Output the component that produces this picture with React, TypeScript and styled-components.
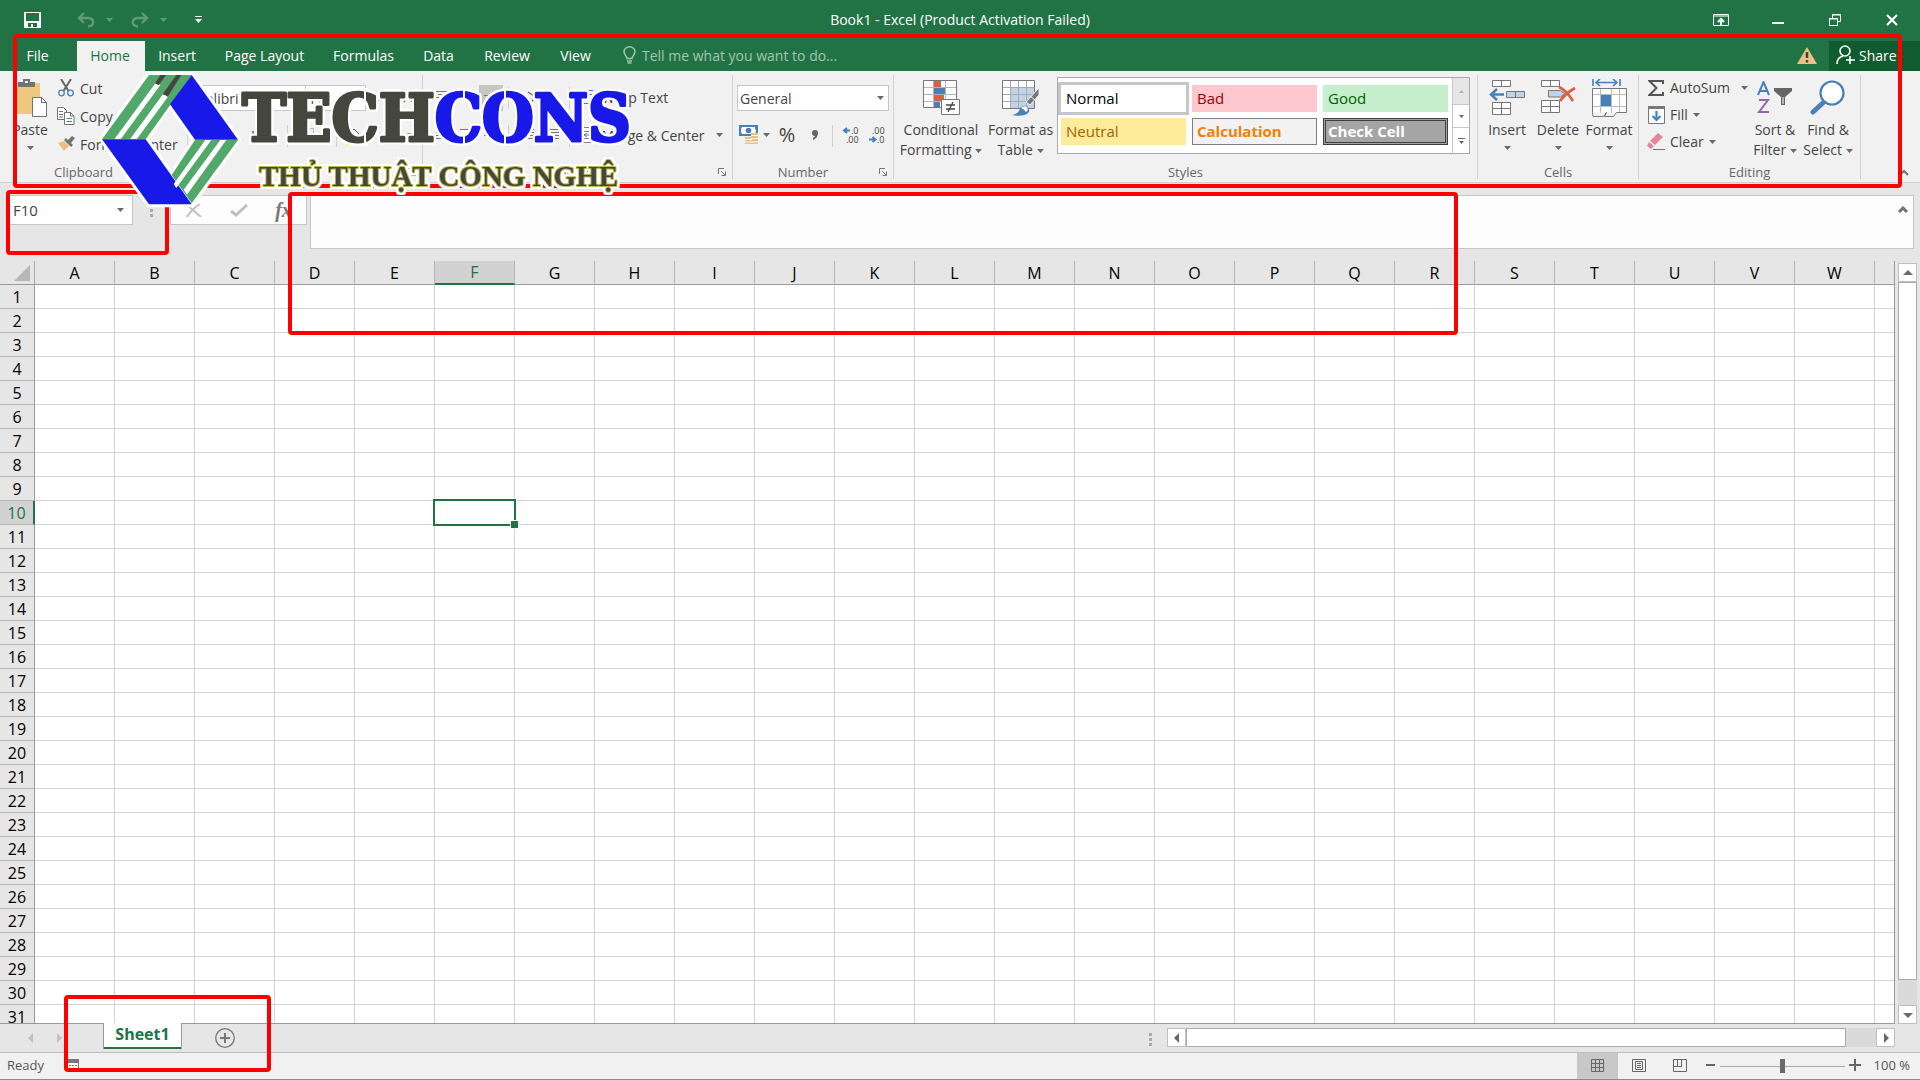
import React from "react";
import styled, { createGlobalStyle, css } from "styled-components";

const GREEN = "#217346";
const BLUE = "#4a80b9";
const INK = "#444444";
const GREY = "#6a6a6a";

const Global = createGlobalStyle`
  * { box-sizing: border-box; }
  body { margin: 0; font-family: "Open Sans", "Noto Sans", sans-serif; font-size: 14px; color: ${INK}; }
  button, input, select, textarea { font: inherit; color: inherit; margin: 0; }
  button { background: none; border: 0; padding: 0; }
`;

const App_ = styled.div`
  position: relative;
  display: flex;
  flex-direction: column;
  height: 100vh;
  overflow: hidden;
  background: #e6e6e6;
`;

/* ---------- title bar ---------- */
const TitleBar = styled.header`
  display: grid;
  grid-template-columns: 1fr auto 1fr;
  align-items: center;
  flex: none;
  height: 41px;
  padding-bottom: 2px;
  background: ${GREEN};
  color: #fff;
`;
const QuickAccess = styled.div`
  display: flex;
  align-items: center;
  padding-left: 24px;
`;
const QuickButton = styled.button<{ $gap?: number; $dim?: boolean }>`
  display: flex;
  margin-left: ${(p) => p.$gap ?? 0}px;
  opacity: ${(p) => (p.$dim ? 0.28 : 1)};
`;
const Title = styled.h1`
  margin: 0;
  font-size: 14px;
  font-weight: 400;
`;
const WindowButtons = styled.div`
  display: flex;
  justify-content: flex-end;
`;
const WindowButton = styled.button`
  display: grid;
  place-items: center;
  width: 57px;
  height: 38px;
`;

/* ---------- ribbon tabs ---------- */
const TabRow = styled.nav`
  display: flex;
  flex: none;
  height: 30px;
  background: ${GREEN};
  color: #fff;
`;
const Tab = styled.button<{ $w: number; $active?: boolean }>`
  width: ${(p) => p.$w}px;
  padding: 0 2px 2px 0;
  white-space: nowrap;
  ${(p) => p.$active && css`background: #f1f1f1; color: ${GREEN};`}
`;
const TellMe = styled.label`
  display: flex;
  align-items: center;
  gap: 6px;
  flex: 1;
  padding: 0 0 2px 16px;
  color: #a3c5b1;
`;
const TellInput = styled.input`
  width: 240px;
  padding: 0;
  border: 0;
  outline: 0;
  background: none;
  &::placeholder { color: #a3c5b1; opacity: 1; }
`;
const Warning = styled.button`
  display: grid;
  place-items: center;
  width: 44px;
`;
const Share = styled.button`
  display: flex;
  align-items: center;
  gap: 4px;
  width: 91px;
  padding: 0 0 2px 7px;
  background: #105c30;
`;

/* ---------- ribbon ---------- */
const Ribbon = styled.section`
  display: flex;
  flex: none;
  height: 112px;
  background: #f1f1f1;
  border-bottom: 1px solid #d2d2d2;
`;
const Group = styled.div<{ $w: number }>`
  display: flex;
  flex-direction: column;
  flex: none;
  width: ${(p) => p.$w}px;
  margin: 4px 0 3px;
  border-right: 1px solid #d2d2d2;
`;
const GroupBody = styled.div<{ $pad?: string }>`
  display: flex;
  flex: 1;
  min-height: 0;
  padding: ${(p) => p.$pad ?? "0"};
`;
const GroupFooter = styled.div`
  display: flex;
  align-items: center;
  height: 14px;
  font-size: 13px;
  line-height: 14px;
  color: #666;
`;
const GroupLabel = styled.span`
  flex: 1;
  text-align: center;
`;
const Launcher = styled.button`
  display: grid;
  place-items: center;
  width: 20px;
  height: 12px;
`;
const RibbonEnd = styled.div`
  display: flex;
  flex: 1;
  align-items: flex-end;
  justify-content: flex-end;
  padding: 0 11px 6px 0;
`;
const BigButton = styled.button<{ $w: number }>`
  display: flex;
  flex-direction: column;
  align-items: center;
  flex: none;
  width: ${(p) => p.$w}px;
  line-height: 20px;
  white-space: nowrap;
`;
const BigIcon = styled.span`
  display: grid;
  place-items: center;
  height: 45px;
`;
const CaretLine = styled.span`
  display: grid;
  place-items: center;
  height: 16px;
`;
const Mid = styled.span`
  display: inline-flex;
  vertical-align: middle;
`;
const SmallColumn = styled.div<{ $row: number }>`
  display: grid;
  grid-auto-rows: ${(p) => p.$row}px;
  align-content: start;
`;
const EditColumn = styled(SmallColumn)`
  width: 101px;
`;
const Push = styled.span`
  display: flex;
  margin-left: auto;
`;
const SmallButton = styled.button`
  display: flex;
  align-items: center;
  gap: 5px;
  padding-bottom: 2px;
  white-space: nowrap;
`;
const SmallIcon = styled.span`
  display: grid;
  place-items: center;
  width: 18px;
`;
const Rows = styled.div`
  display: flex;
  flex-direction: column;
  flex: 1;
  gap: 12px;
`;
const Row = styled.div`
  display: flex;
  align-items: center;
  height: 26px;
`;
const Tool = styled.button<{ $w?: number; $on?: boolean }>`
  display: flex;
  align-items: center;
  justify-content: center;
  gap: 4px;
  flex: none;
  width: ${(p) => p.$w ?? 24}px;
  height: 26px;
  padding-bottom: 2px;
  background: ${(p) => (p.$on ? "#c6c6c6" : "none")};
  white-space: nowrap;
`;
const Bar = styled.span`
  width: 1px;
  height: 22px;
  margin: 0 5px;
  background: #d2d2d2;
`;
const SelectBox = styled.span<{ $w: number }>`
  position: relative;
  display: flex;
  width: ${(p) => p.$w}px;
  height: 26px;
  border: 1px solid #c6c6c6;
  background: #fff;
  & + & { border-left: 0; }
  & > svg { position: absolute; right: 4px; top: 10px; pointer-events: none; }
`;
const Select = styled.select`
  appearance: none;
  width: 100%;
  padding: 0 2px;
  border: 0;
  outline: 0;
  background: none;
`;
const Glyph = styled.span<{ $size: number; $style?: string; $weight?: number; $line?: boolean }>`
  font-size: ${(p) => p.$size}px;
  font-style: ${(p) => p.$style ?? "normal"};
  font-weight: ${(p) => p.$weight ?? 400};
  text-decoration: ${(p) => (p.$line ? "underline" : "none")};
  line-height: 24px;
`;

/* ---------- cell styles gallery ---------- */
const GalleryHold = styled.div`
  padding-top: 2px;
`;
const Gallery = styled.div`
  display: flex;
  width: 413px;
  height: 77px;
  border: 1px solid #ababab;
  background: #fff;
`;
const Swatches = styled.div`
  display: grid;
  flex: 1;
  grid-template-columns: repeat(3, 125px);
  grid-auto-rows: 27px;
  gap: 6px;
  padding: 7px 3px;
`;
const Swatch = styled.button<{ $bg: string; $fg: string; $kind?: "current" | "calc" | "check" }>`
  padding: 0 5px;
  text-align: left;
  font-size: 15px;
  line-height: 25px;
  background: ${(p) => p.$bg};
  color: ${(p) => p.$fg};
  ${(p) => p.$kind === "current" && css`outline: 3px solid #c6c6c6;`}
  ${(p) => p.$kind === "calc" && css`font-weight: 700; box-shadow: inset 0 0 0 1px #7f7f7f;`}
  ${(p) => p.$kind === "check" && css`
    font-weight: 700;
    box-shadow: inset 0 0 0 1px #3f3f3f, inset 0 0 0 2px #a5a5a5, inset 0 0 0 3px #3f3f3f;
  `}
`;
const GalleryScroll = styled.div`
  display: grid;
  grid-template-rows: 26px 23px 1fr;
  width: 17px;
  border-left: 1px solid #c6c6c6;
`;
const GalleryButton = styled.button<{ $off?: boolean }>`
  display: grid;
  place-items: center;
  background: ${(p) => (p.$off ? "#e6e6e6" : "#fff")};
  & + & { border-top: 1px solid #c6c6c6; }
`;

/* ---------- formula bar ---------- */
const FormulaRow = styled.section`
  display: flex;
  flex: none;
  align-items: flex-start;
  height: 78px;
  padding: 12px 6px 0 8px;
`;
const NameBox = styled.label`
  display: flex;
  align-items: center;
  width: 125px;
  height: 30px;
  padding-right: 8px;
  border: 1px solid #c6c6c6;
  background: #fff;
`;
const NameInput = styled.input`
  flex: 1;
  min-width: 0;
  padding: 0 4px;
  border: 0;
  outline: 0;
  background: none;
  font-size: 15px;
`;
const Dots = styled.span<{ $w: number }>`
  display: grid;
  place-items: center;
  width: ${(p) => p.$w}px;
  height: 30px;
`;
const FxBox = styled.div`
  display: flex;
  align-items: center;
  width: 137px;
  height: 30px;
  border: 1px solid #c6c6c6;
  background: #fdfdfd;
`;
const FxButton = styled.button`
  display: grid;
  place-items: center;
  flex: 1;
`;
const FxGlyph = styled.span`
  font-family: "Liberation Serif", serif;
  font-size: 20px;
  font-style: italic;
  font-weight: 700;
  line-height: 24px;
  color: #777;
`;
const FormulaBox = styled.div`
  display: flex;
  flex: 1;
  height: 54px;
  margin-left: 3px;
  padding: 10px 5px;
  border: 1px solid #c6c6c6;
  background: #fdfdfd;
  align-items: flex-start;
`;
const FormulaInput = styled.textarea`
  flex: 1;
  height: 32px;
  padding: 0 4px;
  border: 0;
  outline: 0;
  resize: none;
  background: none;
`;
const IconButton = styled.button`
  display: flex;
`;

/* ---------- sheet ---------- */
const SheetArea = styled.main`
  display: flex;
  flex: 1;
  min-height: 0;
`;
const GridFrame = styled.div`
  flex: 1;
  min-width: 0;
  overflow: hidden;
  border-right: 1px solid #9b9b9b;
  border-bottom: 1px solid #9b9b9b;
`;
const Sheet = styled.table`
  width: 100%;
  table-layout: fixed;
  border-collapse: separate;
  border-spacing: 0;
  color: #000;
`;
const Corner = styled.th`
  height: 24px;
  padding: 0 4px 0 0;
  border-right: 1px solid #ababab;
  border-bottom: 1px solid #9b9b9b;
  background: #e6e6e6;
  & > svg { display: block; margin-left: auto; }
`;
const ColHead = styled.th<{ $on?: boolean }>`
  height: 24px;
  padding: 0;
  border-right: 1px solid #b5b5b5;
  border-bottom: 1px solid #9b9b9b;
  background: #e6e6e6;
  font-size: 16px;
  font-weight: 400;
  line-height: 22px;
  ${(p) => p.$on && css`background: #d2d2d2; color: ${GREEN}; border-bottom: 2px solid ${GREEN};`}
  &:last-child { border-right: 0; }
`;
const RowHead = styled.th<{ $on?: boolean }>`
  height: 24px;
  padding: 0;
  border-right: 1px solid #9b9b9b;
  border-bottom: 1px solid #b5b5b5;
  font-size: 16px;
  font-weight: 400;
  line-height: 22px;
  ${(p) => p.$on && css`background: #d2d2d2; color: ${GREEN}; border-right: 2px solid ${GREEN};`}
`;
const Cell = styled.td<{ $on?: boolean }>`
  position: relative;
  padding: 0;
  border-right: 1px solid #d4d4d4;
  border-bottom: 1px solid #d4d4d4;
  background: #fff;
  &:last-child { border-right: 0; }
  ${(p) => p.$on && css`
    z-index: 1;
    &::before { content: ""; position: absolute; inset: -2px; border: 2px solid ${GREEN}; }
    &::after {
      content: ""; position: absolute; right: -5px; bottom: -5px; width: 7px; height: 7px;
      border: 1px solid #fff; background: ${GREEN};
    }
  `}
`;
const VScroll = styled.div`
  display: flex;
  flex-direction: column;
  flex: none;
  width: 19px;
  margin: 2px 3px 0 3px;
  background: #dadada;
`;
const ScrollButton = styled.button`
  display: grid;
  place-items: center;
  flex: none;
  width: 19px;
  height: 19px;
  border: 1px solid #c0c0c0;
  background: #fff;
`;
const Thumb = styled.div<{ $tail: number; $dir: "row" | "column" }>`
  flex: 1;
  ${(p) => (p.$dir === "row" ? "margin-right" : "margin-bottom")}: ${(p) => p.$tail}px;
  border: 1px solid #ababab;
  background: #fff;
`;

/* ---------- sheet tabs and status ---------- */
const SheetBar = styled.footer`
  display: flex;
  flex: none;
  align-items: flex-start;
  height: 29px;
  padding-right: 25px;
  border-bottom: 1px solid #bdbdbd;
`;
const SheetNav = styled.div`
  display: flex;
  align-items: center;
  gap: 18px;
  width: 103px;
  height: 27px;
  padding-left: 26px;
`;
const SheetTab = styled.button`
  position: relative;
  width: 79px;
  height: 26px;
  margin-top: -1px;
  border: solid #9b9b9b;
  border-width: 0 1px;
  box-shadow: inset 0 -2px ${GREEN};
  background: #fff;
  color: ${GREEN};
  font-size: 16px;
  font-weight: 700;
  line-height: 20px;
  padding-bottom: 5px;
`;
const AddSheet = styled.button`
  display: grid;
  margin: 4px auto 0 33px;
`;
const HScroll = styled.div`
  display: flex;
  width: 728px;
  height: 19px;
  margin: 4px 0 0 12px;
  background: #dadada;
`;
const StatusBar = styled.footer`
  display: flex;
  flex: none;
  align-items: center;
  height: 27px;
  padding: 0 10px 0 7px;
  border-bottom: 1px solid #8c8c8c;
  background: #f1f1f1;
  font-size: 13px;
  line-height: 18px;
  color: #555;
`;
const Ready = styled.span`
  width: 60px;
  padding-bottom: 2px;
`;
const Spacer = styled.span`
  flex: 1;
`;
const ViewButton = styled.button<{ $on?: boolean }>`
  display: grid;
  place-items: center;
  width: 41px;
  height: 26px;
  padding-bottom: 2px;
  background: ${(p) => (p.$on ? "#c8c8c8" : "none")};
`;
const ZoomButton = styled.button`
  display: grid;
  place-items: center;
  width: 20px;
  height: 26px;
  padding-bottom: 2px;
`;
const ZoomRange = styled.input`
  appearance: none;
  width: 125px;
  height: 14px;
  background: linear-gradient(#ababab, #ababab) center / 100% 1px no-repeat;
  &::-webkit-slider-thumb { appearance: none; width: 5px; height: 14px; background: ${GREY}; }
`;
const ZoomValue = styled.span`
  width: 45px;
  padding-bottom: 2px;
  text-align: right;
`;

/* ---------- annotations ---------- */
const Frame = styled.div<{ $area: string }>`
  position: absolute;
  z-index: 5;
  inset: ${(p) => p.$area};
  border: 4px solid #ff0000;
  border-radius: 4px;
  pointer-events: none;
`;
const Brand = styled.svg`
  position: absolute;
  z-index: 6;
  left: 96px;
  top: 66px;
  pointer-events: none;
`;
const Halo = styled.g`
  filter: drop-shadow(2px 0 0 #fff) drop-shadow(-2px 0 0 #fff) drop-shadow(0 2px 0 #fff) drop-shadow(0 -2px 0 #fff);
`;

/* ---------- icons ---------- */
const Caret = ({ c = GREY }: { c?: string }) => (
  <svg width="7" height="4" viewBox="0 0 7 4"><path d="M0 0h7L3.5 4z" fill={c} /></svg>
);
const Tri = ({ d, c = "#6a6a6a" }: { d: "up" | "down" | "left" | "right"; c?: string }) => {
  const p = { up: "M0 7 5 2l5 5z", down: "M0 3h10L5 8z", left: "M7 0v10L2 5z", right: "M3 0v10l5-5z" }[d];
  return <svg width="10" height="10" viewBox="0 0 10 10"><path d={p} fill={c} /></svg>;
};
const DotsIcon = () => (
  <svg width="3" height="13" viewBox="0 0 3 13" fill="#ababab"><path d="M0 0h3v3H0zM0 5h3v3H0zM0 10h3v3H0z" /></svg>
);
const LaunchIcon = () => (
  <svg width="8" height="8" viewBox="0 0 8 8" fill="none" stroke="#777"><path d="M.5 6V.5H6M3 3l4 4M7.5 3.500V7.500H3.500" /></svg>
);
const SaveIcon = () => (
  <svg width="17" height="16" viewBox="0 0 17 16"><path d="M0 0h17v16H0zM2 1v8h13V1zM4 11v4h3v-3h2v3h4v-4z" fill="#fff" fillRule="evenodd" /></svg>
);
const UndoIcon = () => (
  <svg width="18" height="16" viewBox="0 0 18 16" fill="none" stroke="#fff" strokeWidth="2.400"><path d="M7 1 2 6l5 5M2 6h9c7 0 7 8 0 8.500" /></svg>
);
const RedoIcon = () => (
  <svg width="18" height="16" viewBox="0 0 18 16" fill="none" stroke="#fff" strokeWidth="2.400"><path d="m11 1 5 5-5 5M16 6H7c-7 0-7 8 0 8.500" /></svg>
);
const BulbIcon = () => (
  <svg width="13" height="18" viewBox="0 0 13 18" fill="none" stroke="#a3c5b1" strokeWidth="1.500"><path d="M4 12.500C4 10 1 9 1 5.800a5.500 5 0 0 1 11 0C12 9 9 10 9 12.500zM4 15h5M4.500 17h4" /></svg>
);
const WarnIcon = () => (
  <svg width="20" height="18" viewBox="0 0 20 18"><path d="M10 0 20 17H0z" fill="#eac282" /><path d="M10 5v6M10 13v2.500" stroke="#444" strokeWidth="2.500" /></svg>
);
const PersonIcon = () => (
  <svg width="19" height="20" viewBox="0 0 19 20" fill="none" stroke="#fff" strokeWidth="1.600"><circle cx="9" cy="6" r="5" /><path d="M1 19c0-4 2-7 6-8M14 11v8M10 15h9" /></svg>
);
const PasteIcon = () => (
  <svg width="33" height="39" viewBox="0 0 33 39"><path d="M0 5h26v31H0z" fill="#edc87e" /><path d="M4 4h5V1h7v3h5v5H4z" fill="#737373" /><path d="M11 3h3v2h-3z" fill="#f1f1f1" /><path d="M18.500 19.500h9l5 5v14h-14z" fill="#fff" stroke="#737373" /><path d="M27.500 19.500v5h5" fill="none" stroke="#737373" /></svg>
);
const CutIcon = () => (
  <svg width="16" height="18" viewBox="0 0 16 18" fill="none"><path d="m3 0 7.500 12M13 0 5.500 12" stroke="#666" strokeWidth="2" /><circle cx="3.500" cy="14" r="2.800" stroke={BLUE} strokeWidth="1.300" /><circle cx="12.500" cy="14" r="2.800" stroke={BLUE} strokeWidth="1.300" /></svg>
);
const CopyIcon = () => (
  <svg width="18" height="18" viewBox="0 0 18 18"><g fill="#fff" stroke="#737373"><path d="M.5.5h6l3 3v9h-9z" /><path d="M7.500 5.500h6l3.500 3.500v8.500H7.500z" /><path d="M13.500 5.500V9H17" fill="none" /></g><path d="M2 4.500h4M2 7.500h4M2 10h4M9.500 11.500h5.500M9.500 14.500h5.500" stroke={BLUE} /></svg>
);
const BrushIcon = () => (
  <svg width="18" height="16" viewBox="0 0 18 16"><path d="m1 7 6-2 5 5-5 5z" fill="#e9c083" /><path d="m7 4 2-2 7 7-2 2zM11 4l4-4 3 2-4 5z" fill="#737373" /></svg>
);
const FillIcon = () => (
  <svg width="17" height="19" viewBox="0 0 17 19"><path d="m2 9 6-6 5 5-6 6z" fill="#fff" stroke="#666" /><path d="M12 8q4 1 3 5-3-1-3-5" fill={BLUE} /><path d="M0 16h17v3H0z" fill="#ff0" /></svg>
);
const BorderIcon = () => (
  <svg width="15" height="15" viewBox="0 0 15 15" stroke="#888" fill="none"><path d="M.5.5h14v14H.5zM7.500 0v15M0 7.500h15" strokeDasharray="1 1" /><path d="M0 14h15" stroke="#444" strokeWidth="2" /></svg>
);
const FontColorIcon = () => (
  <svg width="20" height="19" viewBox="0 0 20 19"><path d="m5 13 5-12 5 12M7 9h6" stroke="#555" strokeWidth="1.600" fill="none" /><path d="M0 17h20v2H0z" fill="#f33" /></svg>
);
const LinesIcon = ({ v }: { v: number }) => (
  <svg width="14" height="16" viewBox="0 0 14 16" stroke="#777">
    {v < 3
      ? <path d={`M0 ${2.5 + v * 2}h14M2 ${5.5 + v * 2}h10M0 ${8.5 + v * 2}h14`} />
      : <path d={["M0 2.500h14M0 5.500h9M0 8.500h14M0 11.500h9", "M0 2.500h14M2 5.500h10M0 8.500h14M2 11.500h10", "M0 2.500h14M5 5.500h9M0 8.500h14M5 11.500h9", "M0 2.500h14M6 5.500h8M6 8.500h8M0 11.500h14"][v - 3]} />}
  </svg>
);
const OrientIcon = () => (
  <svg width="18" height="18" viewBox="0 0 18 18" fill="none" stroke="#666" strokeWidth="1.300"><path d="M3 17 15 5M11 5h4v4M1 8l5 4M3 4l6 4" /></svg>
);
const WrapIcon = () => (
  <svg width="16" height="18" viewBox="0 0 16 18" fill="none" stroke={BLUE}><path d="M1 2.500h10M1 6.500h13q2 5-3 5H8M1 11.500h4M1 15.500h6M10 9l-2 2.500 2 2.500" /></svg>
);
const MergeIcon = () => (
  <svg width="16" height="16" viewBox="0 0 16 16" fill="#fff" stroke="#888"><path d="M.5.5h15v15H.5zM0 4.500h16M0 11.500h16M8 0v4M8 12v4" /><path d="M2 8h12M5 6 2 8l3 2M11 6l3 2-3 2" stroke={BLUE} fill="none" /></svg>
);
const MoneyIcon = () => (
  <svg width="20" height="20" viewBox="0 0 20 20"><path d="M0 0h19v11H0z" fill={BLUE} /><path d="M3 2h13v2l1 1v2l-1 2H3L2 7V4z" fill="#fff" /><circle cx="9.500" cy="5.500" r="2.800" fill={BLUE} /><path d="M12 8h7v11h-6v-5h-1zM6 12h8v7H6z" fill="#e9c083" /><path d="M12 10.500h7M12 13.500h7M6 14.500h7M6 17h13" stroke="#fff" /></svg>
);
const DecimalIcon = ({ inc }: { inc?: boolean }) => (
  <svg width="19" height="22" viewBox="0 0 19 22" fontFamily="Open Sans, sans-serif" fontSize="9" fill="#444">
    <text x={inc ? 9 : 4} y="10">{inc ? ".0" : ".00"}</text>
    <text x={inc ? 4 : 9} y="19">{inc ? ".00" : ".0"}</text>
    <path d={inc ? "M8 6.500H2M5 4 2 6.500 5 9" : "M1 15.500h6M4.500 13l3 2.500-3 2.500"} stroke={BLUE} strokeWidth="2" fill="none" />
  </svg>
);
const CondIcon = () => (
  <svg width="37" height="35" viewBox="0 0 37 35"><path d="M.5.5h33v27H.5z" fill="#fff" /><path d="M11 1h7v7h-7zM11 15h10v7H11z" fill="#dc6142" /><path d="M11 8h12v6H11zM11 22h6v6h-6z" fill={BLUE} /><path d="M10.500 0v28M22.500 0v28M0 7.500h34M0 14.500h34M0 21.500h34" stroke="#b5b5b5" /><path d="M.5.5h33v27H.5z" fill="none" stroke="#777" /><path d="M18.500 19.500h18v15h-18z" fill="#fff" stroke="#777" /><path d="M23 25h9M23 29h9M30 22l-5 10" stroke="#444" strokeWidth="1.300" /></svg>
);
const TableIcon = () => (
  <svg width="38" height="36" viewBox="0 0 38 36"><path d="M.5.5h32v28H.5z" fill="#fff" /><path d="M9 8h24v21H9z" fill="#bfd3e9" /><path d="M8.500 0v29M16.500 0v29M24.500 0v29M0 7.500h33M0 14.500h33M0 21.500h33" stroke="#aaa" /><path d="M.5.5h32v28H.5z" fill="none" stroke="#777" /><path d="M37 8v7L28 25l-4-3z" fill="#777" stroke="#f1f1f1" /><path d="m28 16 5 4" stroke="#f1f1f1" /><path d="M10 35q7-1 8-7 4-4 8-1 3 4-1 7-5 3-15 1" fill={BLUE} /><path d="M19 28q3-3 6-1 2 3-1 5-2-3-5-4" fill="#fff" /></svg>
);
const InsertIcon = () => (
  <svg width="36" height="37" viewBox="0 0 36 37"><g fill="#fff" stroke="#777"><path d="M3.500 1.500h18v6h-18zM12.500 1v7M3.500 23.500h18v12h-18zM3 29.500h19M12.500 23v13" /><path d="M17.500 12.500h18v6h-18zM26.500 12v7" fill="#bfd3e9" /></g><path d="M15 15.500H2M8 10l-6 5.500L8 21" stroke={BLUE} strokeWidth="2.500" fill="none" /></svg>
);
const DeleteIcon = () => (
  <svg width="36" height="37" viewBox="0 0 36 37"><g fill="#fff" stroke="#777"><path d="M1.500 1.500h18v6h-18zM10.500 1v7M1.500 21.500h18v12h-18zM1 27.500h19M10.500 21v13" /><path d="M8.500 11.500h12l4 3-4 3.500h-12z" fill="#bfd3e9" /></g><path d="M19 8q7 3 14 14M35 9q-9 5-15 13" stroke="#dc6142" strokeWidth="2.800" fill="none" /></svg>
);
const FormatIcon = () => (
  <svg width="35" height="38" viewBox="0 0 35 38"><path d="M1 0v7M28 0v7M4 3.500h21M8 0 4 3.500 8 7M21 0l4 3.500L21 7" stroke={BLUE} strokeWidth="1.600" fill="none" /><path d="M.5 9.500h34v24H.5z" fill="#fff" /><path d="M8.500 9v25M19.500 9v25M27.500 9v25M0 15.500h35M0 27.500h35" stroke="#bbb" /><path d="M.5 9.500h34v24h-10l-3 4h-9l2-4-3 4H1l-.5-4z" fill="none" stroke="#777" /><path d="M9 16h10v11H9z" fill={BLUE} /></svg>
);
const SumIcon = () => (
  <svg width="16" height="16" viewBox="0 0 16 16"><path d="M15 4V1H1.500l7 7-7 7H15v-3" fill="none" stroke="#555" strokeWidth="2" /></svg>
);
const FillDownIcon = () => (
  <svg width="17" height="18" viewBox="0 0 17 18"><path d="M.5.5h16v17H.5z" fill="#fff" stroke="#777" /><path d="M0 0h17v3H0z" fill="#777" /><path d="M8.500 5v9M4.500 10l4 4 4-4" stroke={BLUE} strokeWidth="2.200" fill="none" /></svg>
);
const EraserIcon = () => (
  <svg width="18" height="17" viewBox="0 0 18 17"><path d="m11 0 5 4-8 8-5-4z" fill="#e9859a" /><path d="m2 9 5 4-3 3-4-3z" fill="#e9859a" /><path d="M6 16.500h12" stroke="#777" /></svg>
);
const SortIcon = () => (
  <svg width="36" height="33" viewBox="0 0 36 33" fill="none"><path d="M1 14 6.500 1 12 14M3 10h7" stroke={BLUE} strokeWidth="2" /><path d="M2 19h9L2 31h10" stroke="#9a5fb8" strokeWidth="2" /><path d="M17 7h18v3l-7 6v8h-4v-8l-7-6z" fill="#666" /><path d="M26 16v7" stroke="#fff" /></svg>
);
const FindIcon = () => (
  <svg width="36" height="36" viewBox="0 0 36 36"><path d="m3 32 12-11" stroke={BLUE} strokeWidth="5" strokeLinecap="round" /><circle cx="22" cy="13" r="11.500" fill="#fff" stroke={BLUE} strokeWidth="2.200" /></svg>
);
const RibbonOptIcon = () => (
  <svg width="16" height="12" viewBox="0 0 16 12" fill="none" stroke="#fff"><path d="M.5.5h15v11H.5zM0 2h16" /><path d="M8 11V5M5 8l3-3 3 3" strokeWidth="2" /></svg>
);
const MinIcon = () => <svg width="12" height="12" viewBox="0 0 12 12"><path d="M0 8h12v2H0z" fill="#fff" /></svg>;
const RestoreIcon = () => (
  <svg width="12" height="12" viewBox="0 0 12 12" fill="none" stroke="#fff"><path d="M.5 4.500h8v7h-8zM3.500 4V.5h8v7H9" /><path d="M0 5h9M3 1h9" /></svg>
);
const CloseIcon = () => <svg width="12" height="12" viewBox="0 0 12 12"><path d="m1 1 10 10M11 1 1 11" stroke="#fff" strokeWidth="2.200" /></svg>;
const Chevron = ({ w = 2 }: { w?: number }) => (
  <svg width="10" height="7" viewBox="0 0 10 7"><path d="m1 6 4-4 4 4" fill="none" stroke="#737373" strokeWidth={w} /></svg>
);

/* ---------- data ---------- */
const TABS: [string, number][] = [
  ["Home", 68], ["Insert", 66], ["Page Layout", 109], ["Formulas", 89], ["Data", 61], ["Review", 76], ["View", 61],
];
const COLS = "ABCDEFGHIJKLMNOPQRSTUVW".split("");
const ROWS = Array.from({ length: 31 }, (_, i) => i + 1);

const GroupBox = ({ w, label, pad, launch, children }: {
  w: number; label: string; pad?: string; launch?: boolean; children: React.ReactNode;
}) => (
  <Group $w={w}>
    <GroupBody $pad={pad}>{children}</GroupBody>
    <GroupFooter>
      <GroupLabel>{label}</GroupLabel>
      {launch && <Launcher aria-label={`${label} settings`}><LaunchIcon /></Launcher>}
    </GroupFooter>
  </Group>
);

const Big = ({ w, icon, top, bottom }: { w: number; icon: React.ReactNode; top: string; bottom?: string }) => (
  <BigButton $w={w}>
    <BigIcon>{icon}</BigIcon>
    <span>{top}</span>
    {bottom ? <span>{bottom} <Mid><Caret /></Mid></span> : <CaretLine><Caret /></CaretLine>}
  </BigButton>
);

const Logo = () => (
  <Brand width="544" height="144" viewBox="96 66 544 144" role="img" aria-label="Techcons">
    <g transform="translate(80 60) scale(.33333)">
      <path d="M207 45H335L474 239 335 433H207L66 238zM270 133 197 238 275 345 345 240z" fill="#fff" fillRule="evenodd" stroke="#fff" strokeWidth="18" strokeLinejoin="round" />
      <path d="M207 45H335L197 238H66z" fill="#52a868" />
      <path d="M103 238 229 66l12 9-119 163zM150 238l101-138 12 12-93 126z" fill="#fff" />
      <path d="m225 70 16-25h17l-22 31zM248 103l41-58h15l-40 64z" fill="#45463e" />
      <path d="M335 45 474 239H345L270 133z" fill="#1818e8" />
      <path d="M66 238H197L335 433H207z" fill="#1818e8" />
      <path d="M345 240H474L335 430 275 345z" fill="#52a868" />
      <path d="M376 240h18l-105 144-8-12zM421 240h18L321 404l-10-15z" fill="#fff" />
    </g>
    <Halo>
      <g fontFamily="'DejaVu Serif Condensed', 'DejaVu Serif', serif" fontWeight="700" fontSize="66" strokeWidth="3" strokeLinejoin="round">
        <text x="242" y="141" fill="#45463e" stroke="#45463e">TECH<tspan fill="#1818e8" stroke="#1818e8">CONS</tspan></text>
      </g>
      <path d="M365 90v11M365 132v12M464 90v11M464 132v12M505 90v11M505 132v12" stroke="#fff" strokeWidth="2" />
    </Halo>
    <Halo>
      <g fontFamily="'Liberation Serif', serif" fontWeight="700" fontSize="29" strokeLinejoin="round" paintOrder="stroke">
        <text x="259" y="186" fill="#45463e" stroke="#bdb84e" strokeWidth="2">THỦ THUẬT CÔNG NGHỆ</text>
      </g>
    </Halo>
  </Brand>
);

export default function App() {
  return (
    <App_>
      <Global />
      <TitleBar>
        <QuickAccess>
          <QuickButton aria-label="Save"><SaveIcon /></QuickButton>
          <QuickButton $gap={36} $dim aria-label="Undo"><UndoIcon /></QuickButton>
          <QuickButton $gap={11} $dim aria-label="Undo list"><Caret c="#fff" /></QuickButton>
          <QuickButton $gap={18} $dim aria-label="Redo"><RedoIcon /></QuickButton>
          <QuickButton $gap={11} $dim aria-label="Redo list"><Caret c="#fff" /></QuickButton>
          <QuickButton $gap={28} aria-label="Customize toolbar">
            <svg width="7" height="7" viewBox="0 0 7 7" fill="#fff"><path d="M0 0h7v1H0zM0 3h7L3.500 7z" /></svg>
          </QuickButton>
        </QuickAccess>
        <Title>Book1 - Excel (Product Activation Failed)</Title>
        <WindowButtons>
          <WindowButton aria-label="Ribbon display options"><RibbonOptIcon /></WindowButton>
          <WindowButton aria-label="Minimize"><MinIcon /></WindowButton>
          <WindowButton aria-label="Restore"><RestoreIcon /></WindowButton>
          <WindowButton aria-label="Close"><CloseIcon /></WindowButton>
        </WindowButtons>
      </TitleBar>

      <TabRow>
        <Tab $w={77}>File</Tab>
        {TABS.map(([name, w]) => <Tab key={name} $w={w} $active={name === "Home"}>{name}</Tab>)}
        <TellMe><BulbIcon /><TellInput aria-label="Tell me" placeholder="Tell me what you want to do..." /></TellMe>
        <Warning aria-label="Activation warning"><WarnIcon /></Warning>
        <Share><PersonIcon />Share</Share>
      </TabRow>

      <Ribbon>
        <GroupBox w={188} label="Clipboard" launch pad="0 0 0 3px">
          <Big w={54} icon={<PasteIcon />} top="Paste" />
          <SmallColumn $row={28}>
            <SmallButton><SmallIcon><CutIcon /></SmallIcon>Cut</SmallButton>
            <SmallButton><SmallIcon><CopyIcon /></SmallIcon>Copy</SmallButton>
            <SmallButton><SmallIcon><BrushIcon /></SmallIcon>Format Painter</SmallButton>
          </SmallColumn>
        </GroupBox>

        <GroupBox w={235} label="Font" launch pad="10px 0 0 6px">
          <Rows>
            <Row>
              <SelectBox $w={112}><Select aria-label="Font"><option>Calibri</option></Select><Caret /></SelectBox>
              <SelectBox $w={60}><Select aria-label="Font size"><option>11</option></Select><Caret /></SelectBox>
              <Tool $w={30} aria-label="Increase font size"><Glyph $size={18}>A</Glyph></Tool>
              <Tool aria-label="Decrease font size"><Glyph $size={14}>A</Glyph></Tool>
            </Row>
            <Row>
              <Tool><Glyph $size={15} $weight={700}>B</Glyph></Tool>
              <Tool><Glyph $size={15} $style="italic">I</Glyph></Tool>
              <Tool $w={40}><Glyph $size={15} $line>U</Glyph><Caret /></Tool>
              <Bar />
              <Tool $w={38} aria-label="Borders"><BorderIcon /><Caret /></Tool>
              <Bar />
              <Tool $w={36} aria-label="Fill color"><FillIcon /><Caret /></Tool>
              <Tool $w={40} aria-label="Font color"><FontColorIcon /><Caret /></Tool>
            </Row>
          </Rows>
        </GroupBox>

        <GroupBox w={310} label="Alignment" launch pad="10px 0 0 8px">
          <Rows>
            <Row>
              <Tool aria-label="Top align"><LinesIcon v={0} /></Tool>
              <Tool aria-label="Middle align"><LinesIcon v={1} /></Tool>
              <Tool $on aria-label="Bottom align"><LinesIcon v={2} /></Tool>
              <Bar />
              <Tool $w={50} aria-label="Orientation"><OrientIcon /><Caret /></Tool>
              <Bar />
              <Tool $w={100}><WrapIcon />Wrap Text</Tool>
            </Row>
            <Row>
              <Tool aria-label="Align left"><LinesIcon v={3} /></Tool>
              <Tool aria-label="Center"><LinesIcon v={4} /></Tool>
              <Tool aria-label="Align right"><LinesIcon v={5} /></Tool>
              <Bar />
              <Tool $w={25} aria-label="Decrease indent"><LinesIcon v={6} /></Tool>
              <Tool $w={25} aria-label="Increase indent"><LinesIcon v={6} /></Tool>
              <Bar />
              <Tool $w={136}><MergeIcon />Merge &amp; Center</Tool>
              <Tool $w={16} aria-label="Merge options"><Caret /></Tool>
            </Row>
          </Rows>
        </GroupBox>

        <GroupBox w={161} label="Number" launch pad="10px 0 0 4px">
          <Rows>
            <Row><SelectBox $w={152}><Select aria-label="Number format"><option>General</option></Select><Caret /></SelectBox></Row>
            <Row>
              <Tool $w={34} aria-label="Accounting format"><MoneyIcon /><Caret /></Tool>
              <Tool $w={32}><Glyph $size={20}>%</Glyph></Tool>
              <Tool aria-label="Comma style">
                <svg width="7" height="10" viewBox="0 0 7 10"><path d="M3 0a3 3 0 0 1 3 3Q6 8 1 10V8q2-1 2-2a3 3 0 0 1 0-6" fill="#666" /></svg>
              </Tool>
              <Bar />
              <Tool $w={26} aria-label="Increase decimal"><DecimalIcon inc /></Tool>
              <Tool $w={26} aria-label="Decrease decimal"><DecimalIcon /></Tool>
            </Row>
          </Rows>
        </GroupBox>

        <GroupBox w={584} label="Styles" pad="0 0 0 4px">
          <Big w={86} icon={<CondIcon />} top="Conditional" bottom="Formatting" />
          <Big w={73} icon={<TableIcon />} top="Format as" bottom="Table" />
          <GalleryHold>
            <Gallery>
              <Swatches>
                <Swatch $bg="#fff" $fg="#000" $kind="current">Normal</Swatch>
                <Swatch $bg="#ffc7ce" $fg="#9c0006">Bad</Swatch>
                <Swatch $bg="#c6efce" $fg="#006100">Good</Swatch>
                <Swatch $bg="#ffeb9c" $fg="#9c6500">Neutral</Swatch>
                <Swatch $bg="#f2f2f2" $fg="#fa7d00" $kind="calc">Calculation</Swatch>
                <Swatch $bg="#a5a5a5" $fg="#fff" $kind="check">Check Cell</Swatch>
              </Swatches>
              <GalleryScroll>
                <GalleryButton $off aria-label="Previous styles"><svg width="5" height="3" viewBox="0 0 5 3"><path d="M0 3h5L2.500 0z" fill="#b5b5b5" /></svg></GalleryButton>
                <GalleryButton aria-label="Next styles"><svg width="5" height="3" viewBox="0 0 5 3"><path d="M0 0h5L2.500 3z" fill="#666" /></svg></GalleryButton>
                <GalleryButton aria-label="All styles"><svg width="7" height="6" viewBox="0 0 7 6"><path d="M0 0h7v1H0zM1 3h5L3.500 6z" fill="#666" /></svg></GalleryButton>
              </GalleryScroll>
            </Gallery>
          </GalleryHold>
        </GroupBox>

        <GroupBox w={161} label="Cells" pad="0 0 0 4px">
          <Big w={50} icon={<InsertIcon />} top="Insert" />
          <Big w={52} icon={<DeleteIcon />} top="Delete" />
          <Big w={50} icon={<FormatIcon />} top="Format" />
        </GroupBox>

        <GroupBox w={222} label="Editing" pad="0 0 0 8px">
          <EditColumn $row={27}>
            <SmallButton><SmallIcon><SumIcon /></SmallIcon>AutoSum<Push><Caret /></Push></SmallButton>
            <SmallButton><SmallIcon><FillDownIcon /></SmallIcon>Fill<Caret /></SmallButton>
            <SmallButton><SmallIcon><EraserIcon /></SmallIcon>Clear<Caret /></SmallButton>
          </EditColumn>
          <Big w={54} icon={<SortIcon />} top="Sort &amp;" bottom="Filter" />
          <Big w={52} icon={<FindIcon />} top="Find &amp;" bottom="Select" />
        </GroupBox>
        <RibbonEnd><IconButton aria-label="Collapse ribbon"><Chevron /></IconButton></RibbonEnd>
      </Ribbon>

      <FormulaRow>
        <NameBox><NameInput aria-label="Name box" defaultValue="F10" /><Caret /></NameBox>
        <Dots $w={37}><DotsIcon /></Dots>
        <FxBox>
          <FxButton aria-label="Cancel"><svg width="16" height="13" viewBox="0 0 16 13"><path d="m1 1 14 12M14 0Q6 5 1 13" stroke="#c0c0c0" strokeWidth="2" fill="none" /></svg></FxButton>
          <FxButton aria-label="Enter"><svg width="18" height="13" viewBox="0 0 18 13"><path d="m1 7 5 4L17 1" stroke="#c0c0c0" strokeWidth="3" fill="none" /></svg></FxButton>
          <FxButton aria-label="Insert function"><FxGlyph>fx</FxGlyph></FxButton>
        </FxBox>
        <FormulaBox>
          <FormulaInput aria-label="Formula" />
          <IconButton aria-label="Collapse formula bar"><Chevron w={3} /></IconButton>
        </FormulaBox>
      </FormulaRow>

      <SheetArea>
        <GridFrame>
          <Sheet>
            <colgroup>
              <col width="35" />
              {COLS.map((c) => <col key={c} width="80" />)}
              <col />
            </colgroup>
            <thead>
              <tr>
                <Corner><svg width="16" height="16" viewBox="0 0 16 16"><path d="M16 0v16H0z" fill="#b5b8b7" /></svg></Corner>
                {COLS.map((c) => <ColHead key={c} $on={c === "F"}>{c}</ColHead>)}
                <ColHead />
              </tr>
            </thead>
            <tbody>
              {ROWS.map((r) => (
                <tr key={r}>
                  <RowHead $on={r === 10}>{r}</RowHead>
                  {COLS.map((c) => <Cell key={c} $on={c === "F" && r === 10} />)}
                  <Cell />
                </tr>
              ))}
            </tbody>
          </Sheet>
        </GridFrame>
        <VScroll>
          <ScrollButton aria-label="Scroll up"><Tri d="up" /></ScrollButton>
          <Thumb $dir="column" $tail={25} />
          <ScrollButton aria-label="Scroll down"><Tri d="down" /></ScrollButton>
        </VScroll>
      </SheetArea>

      <SheetBar>
        <SheetNav>
          <IconButton aria-label="Previous sheet"><Tri d="left" c="#c0c0c0" /></IconButton>
          <IconButton aria-label="Next sheet"><Tri d="right" c="#c0c0c0" /></IconButton>
        </SheetNav>
        <SheetTab>Sheet1</SheetTab>
        <AddSheet aria-label="New sheet">
          <svg width="20" height="20" viewBox="0 0 20 20" fill="none" stroke="#777"><circle cx="10" cy="10" r="9.300" strokeWidth="1.300" /><path d="M10 5v10M5 10h10" strokeWidth="2" /></svg>
        </AddSheet>
        <Dots $w={9}><DotsIcon /></Dots>
        <HScroll>
          <ScrollButton aria-label="Scroll left"><Tri d="left" /></ScrollButton>
          <Thumb $dir="row" $tail={30} />
          <ScrollButton aria-label="Scroll right"><Tri d="right" /></ScrollButton>
        </HScroll>
      </SheetBar>

      <StatusBar>
        <Ready>Ready</Ready>
        <svg width="12" height="15" viewBox="0 0 12 15"><path d="M.5.5h11v11H.5z" fill="#fff" stroke="#777" /><path d="M0 0h12v4H0z" fill="#777" /><path d="M2 6.500h8M2 9.500h8" stroke="#777" strokeDasharray="2 1" /></svg>
        <Spacer />
        <ViewButton $on aria-label="Normal view"><svg width="13" height="13" viewBox="0 0 13 13" fill="none" stroke="#666"><path d="M.5.5h12v12H.5zM4.500 0v13M8.500 0v13M0 4.500h13M0 8.500h13" /></svg></ViewButton>
        <ViewButton aria-label="Page layout view"><svg width="14" height="13" viewBox="0 0 14 13" fill="none" stroke="#666"><path d="M.5.5h13v12H.5zM3.500 2.500h7v8h-7zM5 4.500h4M5 6.500h4M5 8.500h4" /></svg></ViewButton>
        <ViewButton aria-label="Page break view"><svg width="14" height="13" viewBox="0 0 14 13" fill="none" stroke="#666"><path d="M.5.5h13v12H.5zM4.500 0v7.500M8.500 0v7.500M0 7.500h9" /></svg></ViewButton>
        <ZoomButton aria-label="Zoom out"><svg width="9" height="2" viewBox="0 0 9 2"><path d="M0 0h9v2H0z" fill="#666" /></svg></ZoomButton>
        <ZoomRange type="range" aria-label="Zoom" min={0} max={200} defaultValue={100} />
        <ZoomButton aria-label="Zoom in"><svg width="12" height="12" viewBox="0 0 12 12"><path d="M6 0v12M0 6h12" stroke="#666" strokeWidth="2" /></svg></ZoomButton>
        <ZoomValue>100 %</ZoomValue>
      </StatusBar>

      <Frame $area="34px 18px calc(100% - 188px) 13px" />
      <Frame $area="190px calc(100% - 169px) calc(100% - 255px) 6px" />
      <Frame $area="192px calc(100% - 1458px) calc(100% - 335px) 288px" />
      <Frame $area="calc(100% - 85px) calc(100% - 271px) 8px 64px" />
      <Logo />
    </App_>
  );
}
